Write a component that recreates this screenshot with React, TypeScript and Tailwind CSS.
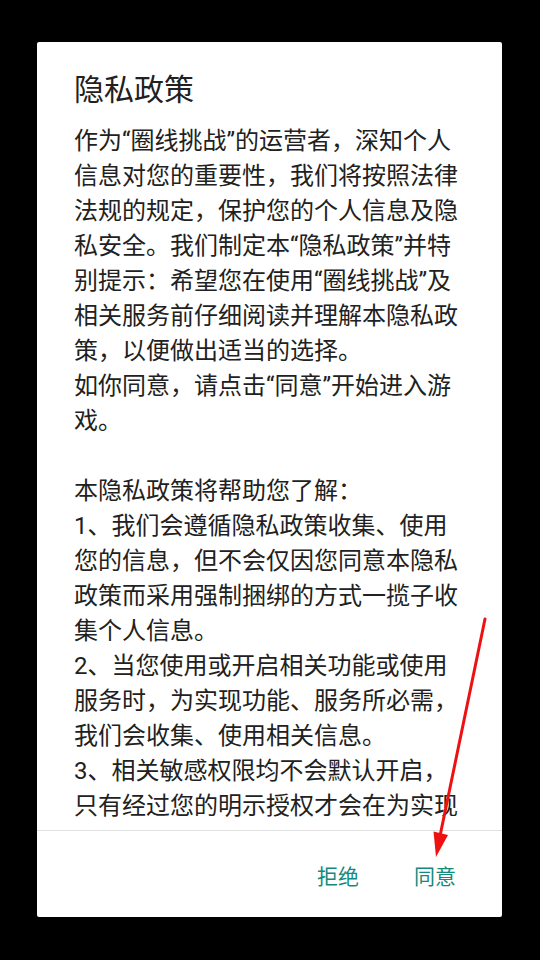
import React from "react";

const FONT = { fontFamily: '"Roboto", "Noto Sans CJK SC", sans-serif' } as const;

export default function App() {
  return (
    <div className="relative w-[540px] h-[960px] bg-black pt-[42px] pl-[37px] overflow-hidden" style={FONT}>
      <div className="w-[465px] h-[875px] bg-white rounded-[2px] flex flex-col">
        <div className="pt-[28px] px-[37px]">
          <h1 className="text-[30px] leading-[40px] text-[#212121] font-normal">隐私政策</h1>
        </div>
        <div className="mt-[14px] mb-[6px] h-[700px] overflow-hidden pl-[37px] pr-[37px] text-[24px] leading-[35px] text-[#212121]">
          <p>
            作为“圈线挑战”的运营者，深知个人信息对您的重要性，我们将按照法律法规的规定，保护您的个人信息及隐私安全。我们制定本“隐私政策”并特别提示：希望您在使用“圈线挑战”及相关服务前仔细阅读并理解本隐私政策，以便做出适当的选择。
          </p>
          <p>如你同意，请点击“同意”开始进入游戏。</p>
          <p>&nbsp;</p>
          <p>本隐私政策将帮助您了解：</p>
          <p>1、我们会遵循隐私政策收集、使用您的信息，但不会仅因您同意本隐私政策而采用强制捆绑的方式一揽子收集个人信息。</p>
          <p>2、当您使用或开启相关功能或使用服务时，为实现功能、服务所必需，我们会收集、使用相关信息。</p>
          <p>3、相关敏感权限均不会默认开启，只有经过您的明示授权才会在为实现某些功能或服务时使用，不会在功能或服务不需要时而通过您授权的权限收集信息。</p>
        </div>
        <div className="h-px bg-[#e0e0e0]" />
        <div className="flex-1 flex items-center justify-end pr-[34px] gap-[31px] pt-[6px]">
          <button className="px-[12px] text-[21px] leading-[30px] text-[#138a7c]">拒绝</button>
          <button className="px-[12px] text-[21px] leading-[30px] text-[#138a7c]">同意</button>
        </div>
      </div>
      <svg className="absolute left-0 top-0 pointer-events-none" width="540" height="960" viewBox="0 0 540 960">
        <line x1="485" y1="619" x2="440" y2="836" stroke="#ee1111" strokeWidth="3" strokeLinecap="round" />
        <polygon points="433.5,831.5 448,835 436,857" fill="#ee1111" />
      </svg>
    </div>
  );
}
